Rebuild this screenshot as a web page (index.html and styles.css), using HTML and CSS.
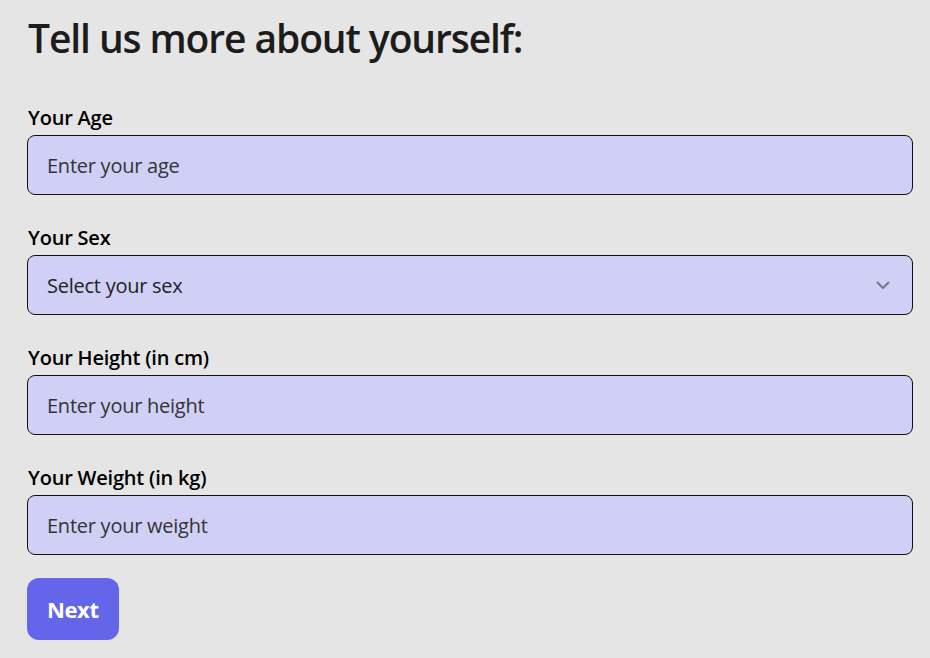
FILE: index.html
```html
<!DOCTYPE html>
<html lang="en">
<head>
<meta charset="utf-8">
<title>Tell us more about yourself</title>
<link rel="stylesheet" href="styles.css">
</head>
<body>
<main class="page">
  <h1 class="title">Tell us more about yourself:</h1>
  <form class="form">
    <div class="field">
      <label class="label" for="age">Your Age</label>
      <input class="input" id="age" type="text" placeholder="Enter your age">
    </div>
    <div class="field">
      <label class="label" for="sex">Your Sex</label>
      <div class="select-wrap">
        <select class="input select" id="sex">
          <option>Select your sex</option>
          <option>Male</option>
          <option>Female</option>
        </select>
        <svg class="chevron" width="14" height="9" viewBox="0 0 14 9" aria-hidden="true">
          <path d="M1.5 1.5 L7 7 L12.5 1.5" fill="none" stroke="#6b7280" stroke-width="1.8" stroke-linecap="round" stroke-linejoin="round"/>
        </svg>
      </div>
    </div>
    <div class="field">
      <label class="label" for="height">Your Height (in cm)</label>
      <input class="input" id="height" type="text" placeholder="Enter your height">
    </div>
    <div class="field">
      <label class="label" for="weight">Your Weight (in kg)</label>
      <input class="input" id="weight" type="text" placeholder="Enter your weight">
    </div>
    <div class="actions">
      <button class="btn" type="button">Next</button>
    </div>
  </form>
</main>
</body>
</html>
```

FILE: styles.css
```css
* { box-sizing: border-box; }
html, body {
  margin: 0;
  background: #e5e5e5;
}
body {
  font-family: "Open Sans", "Noto Sans", sans-serif;
  color: #1a1a1a;
}
.page {
  padding: 14px 17px 0 27px;
}
.title {
  margin: 0 0 44px 1px;
  font-size: 39px;
  line-height: 48px;
  font-weight: 600;
  letter-spacing: -1.1px;
  color: #1c1c1c;
}
.form {
  display: flex;
  flex-direction: column;
  gap: 31px;
}
.field {
  display: flex;
  flex-direction: column;
  gap: 5px;
}
.label {
  padding-left: 1px;
  font-size: 20px;
  line-height: 24px;
  font-weight: 600;
  letter-spacing: -0.2px;
  color: #000;
}
.input {
  display: block;
  width: 100%;
  height: 60px;
  margin: 0;
  padding: 0 19px;
  border: 1px solid #111;
  border-radius: 8px;
  background: #d0d0f6;
  font-family: inherit;
  font-size: 20px;
  letter-spacing: -0.25px;
  color: #222;
  outline: none;
}
.input::placeholder {
  color: #333;
  opacity: 1;
}
.select-wrap {
  position: relative;
}
.select {
  appearance: none;
  -webkit-appearance: none;
  color: #222;
}
.chevron {
  position: absolute;
  right: 23px;
  top: 26px;
  pointer-events: none;
}
.actions {
  margin-top: -8px;
}
.btn {
  height: 62px;
  padding: 0 20px;
  border: none;
  border-radius: 12px;
  background: #6366e8;
  color: #fff;
  font-family: inherit;
  font-size: 22px;
  font-weight: 700;
  letter-spacing: -0.4px;
}
```
